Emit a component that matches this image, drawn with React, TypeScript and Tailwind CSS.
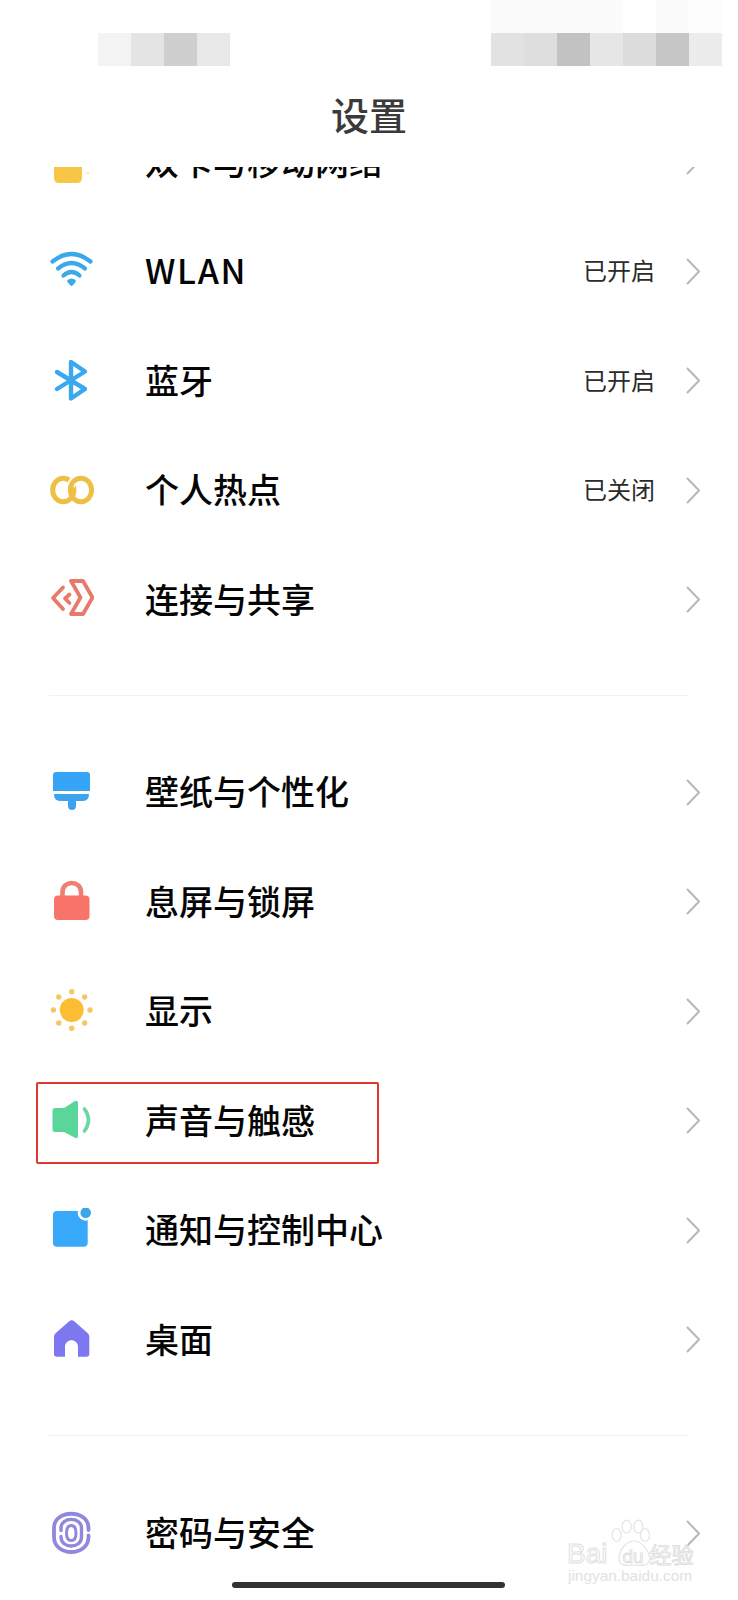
import React from "react";

const FONT = "font-['Noto_Sans_CJK_SC',sans-serif]";

const Icon = ({ children }: { children: React.ReactNode }) => (
  <svg width="44" height="44" viewBox="0 0 44 44" fill="none" className="shrink-0">
    {children}
  </svg>
);

const SimIcon = () => (
  <Icon>
    <path d="M4 2 H32 V37 Q32 43 27 43 H9 Q4 43 4 37 Z" fill="#f8c546" />
    <circle cx="38" cy="33" r="1" fill="#f8d98a" />
  </Icon>
);
const WifiIcon = () => (
  <Icon>
    <g stroke="#3ba8ea" strokeWidth="4.2" strokeLinecap="round">
      <path d="M2.5 12.5 Q21.5 -2.5 40.5 12.5" />
      <path d="M8 19.5 Q21.5 8.5 35 19.5" />
      <path d="M13.5 26.5 Q21.5 19.5 29.5 26.5" />
    </g>
    <path d="M17.5 31 Q21.5 28 25.5 31 Q26.3 32 25.5 33 L22.8 36.3 Q21.5 37.5 20.2 36.3 L17.5 33 Q16.7 32 17.5 31 Z" fill="#3ba8ea" />
  </Icon>
);
const BluetoothIcon = () => (
  <Icon>
    <path d="M7 13 L35 30 L21 39.5 V3 L35 12.5 L7 30" stroke="#39a8ee" strokeWidth="4.4" strokeLinejoin="round" strokeLinecap="round" />
  </Icon>
);
const HotspotIcon = () => (
  <Icon>
    <ellipse cx="31" cy="22" rx="10.6" ry="11.8" stroke="#eebf45" strokeWidth="5" />
    <ellipse cx="13.3" cy="22" rx="10.6" ry="11.8" stroke="#eebf45" strokeWidth="5" />
    <path d="M20.55 18.3 A11 12 0 0 1 24.95 12" stroke="#ffffff" strokeWidth="8.5" />
    <path d="M20.4 22 A10.6 11.8 0 0 1 25.5 11.8" stroke="#eebf45" strokeWidth="5" />
  </Icon>
);
const ConnectIcon = () => (
  <Icon>
    <g stroke="#e87a6b" strokeWidth="3.8" strokeLinejoin="round" strokeLinecap="round">
      <path d="M21 3 H33 L42.5 19.5 L33 36 H21 L30.5 19.5 Z" />
      <path d="M13 9.5 L3 20 L13 31" />
      <path d="M19.5 16.5 L15 20.5 L19.5 25" />
    </g>
  </Icon>
);
const WallpaperIcon = () => (
  <Icon>
    <path d="M6 2 H37 Q40 2 40 5 V21 H3 V5 Q3 2 6 2 Z" fill="#36a4f7" />
    <path d="M4 24 H39 Q39 31 33 31 H26 V36 Q26 40 22 40 Q18 40 18 36 V31 H10 Q4 31 4 24 Z" fill="#3ea2ec" />
  </Icon>
);
const LockIcon = () => (
  <Icon>
    <path d="M12.5 18 V12 C12.5 0 31 0 31 12 V18" stroke="#ee7f74" strokeWidth="4.6" />
    <rect x="4" y="15.5" width="35.5" height="24.5" rx="4" fill="#f8736a" />
  </Icon>
);
const SunIcon = () => {
  const dots = [0, 45, 90, 135, 180, 225, 270, 315];
  return (
    <Icon>
      <circle cx="21.7" cy="21" r="12" fill="#fbbd34" />
      {dots.map((d) => (
        <circle
          key={d}
          cx={21.7 + 18.3 * Math.cos((d * Math.PI) / 180)}
          cy={21 + 18.3 * Math.sin((d * Math.PI) / 180)}
          r="2.7"
          fill="#f4c763"
        />
      ))}
    </Icon>
  );
};
const SoundIcon = () => (
  <Icon>
    <path d="M5 9 H14 L25 2 Q28 0.8 28 4 V37 Q28 40 25 38.8 L14 33 H5 Q2.5 33 2.5 30.5 V11.5 Q2.5 9 5 9 Z" fill="#5ad69b" />
    <path d="M34.5 10 Q42.5 21 34.5 32" stroke="#6bd7a4" strokeWidth="3.6" strokeLinecap="round" />
  </Icon>
);
const NotifyIcon = () => (
  <Icon>
    <rect x="3" y="3" width="34.7" height="35.7" rx="4" fill="#38a8fb" />
    <circle cx="35.7" cy="4.7" r="8" fill="#ffffff" />
    <circle cx="35.7" cy="4.7" r="5.3" fill="#3ba6ea" />
  </Icon>
);
const HomeIcon = () => (
  <Icon>
    <path d="M19.5 3 Q21.7 1.4 24 3 L37.5 15 Q39.3 16.6 39.3 19 V36 Q39.3 38.7 36.5 38.7 H28 V29 C28 20 15 20 15 29 V38.7 H7 Q4 38.7 4 36 V19 Q4 16.6 5.8 15 Z" fill="#7d78ef" />
  </Icon>
);
const FingerIcon = () => (
  <Icon>
    <g stroke="#8f88dd" fill="none" strokeLinecap="round">
      <path d="M38.5 19 V17 C38.5 -2 4 -2 4 17 V26 C4 46 38.5 46 38.5 26 V24.5" strokeWidth="3.8" />
      <path d="M11 19.5 V17 C11 5.5 31.5 5.5 31.5 17 V26 C31.5 38 11 38 11 26 V25.5" strokeWidth="3.4" />
      <path d="M21.3 14.5 C25 14.5 26 18 26 22 C26 26 25 29.5 21.3 29.5 C17.5 29.5 16.5 26 16.5 22 C16.5 18 17.5 14.5 21.3 14.5 Z" strokeWidth="3" />
    </g>
  </Icon>
);

const Chevron = () => (
  <svg width="14" height="27" viewBox="0 0 14 27" fill="none" className="shrink-0">
    <path d="M1 1 L13 13.5 L1 26" stroke="#b8b8b8" strokeWidth="2" />
  </svg>
);

type RowProps = { icon: React.ReactNode; label: string; value?: string; highlight?: boolean; wide?: boolean };

const Row = ({ icon, label, value, highlight, wide }: RowProps) => (
  <div className="relative flex h-[109.5px] items-center pl-[50px] pr-[38px]">
    <div className="w-[95px] shrink-0">{icon}</div>
    <span className={`flex-1 pb-[2px] text-[34px] leading-none font-medium text-[#050505] ${wide ? "tracking-[1.7px]" : ""}`}>
      {label}
    </span>
    {value && <span className="mr-[31px] pb-[2px] text-[24px] leading-none text-[#2b2b2b]">{value}</span>}
    <Chevron />
    {highlight && (
      <div className="absolute left-[36px] top-[16px] h-[82px] w-[343px] rounded-[2px] border-2 border-[#dc3a2e]" />
    )}
  </div>
);

export default function App() {
  const left = ["bg-[#f3f3f3]", "bg-[#e4e4e4]", "bg-[#cfcfcf]", "bg-[#e8e8e8]"];
  const rightTop = ["bg-[#fbfbfb]", "bg-[#fbfbfb]", "bg-[#fafafa]", "bg-[#fbfbfb]", "bg-white", "bg-[#fbfbfb]", "bg-[#fdfdfd]"];
  const rightBottom = ["bg-[#e2e2e2]", "bg-[#dedede]", "bg-[#c2c2c2]", "bg-[#e6e6e6]", "bg-[#dcdcdc]", "bg-[#c6c6c6]", "bg-[#ececec]"];

  return (
    <div className={`relative h-[1600px] w-[738px] overflow-hidden bg-white ${FONT}`}>
      <div className="flex h-[66px] justify-between pl-[98px] pr-[16px]">
        <div className="mt-[33px] flex h-[33px]">
          {left.map((c, i) => (
            <div key={i} className={`h-full w-[33px] ${c}`} />
          ))}
        </div>
        <div className="flex flex-col">
          <div className="flex h-[33px]">
            {rightTop.map((c, i) => (
              <div key={i} className={`h-full w-[33px] ${c}`} />
            ))}
          </div>
          <div className="flex h-[33px]">
            {rightBottom.map((c, i) => (
              <div key={i} className={`h-full w-[33px] ${c}`} />
            ))}
          </div>
        </div>
      </div>

      <div className="flex h-[101px] items-center justify-center pb-[6px] text-[38px] leading-none font-medium text-[#3a3a3a]">
        设置
      </div>

      <div className="h-[1433px] overflow-hidden">
        <div className="-mt-[60px]">
          <Row icon={<SimIcon />} label="双卡与移动网络" />
          <Row icon={<WifiIcon />} label="WLAN" value="已开启" wide />
          <Row icon={<BluetoothIcon />} label="蓝牙" value="已开启" />
          <Row icon={<HotspotIcon />} label="个人热点" value="已关闭" />
          <Row icon={<ConnectIcon />} label="连接与共享" />
          <div className="mx-[49px] mb-[42px] mt-[40px] h-px bg-[#f1f1f1]" />
          <Row icon={<WallpaperIcon />} label="壁纸与个性化" />
          <Row icon={<LockIcon />} label="息屏与锁屏" />
          <Row icon={<SunIcon />} label="显示" />
          <Row icon={<SoundIcon />} label="声音与触感" highlight />
          <Row icon={<NotifyIcon />} label="通知与控制中心" />
          <Row icon={<HomeIcon />} label="桌面" />
          <div className="mx-[49px] mb-[43px] mt-[40px] h-px bg-[#f1f1f1]" />
          <Row icon={<FingerIcon />} label="密码与安全" />
        </div>
      </div>

      <div className="absolute bottom-[12px] left-[232px] h-[6px] w-[273px] rounded-full bg-[#333333]" />

      <div className="absolute left-[568px] top-[1568px] font-['Liberation_Sans',sans-serif] text-[15.4px] leading-none text-[#e2e2e2]">
        jingyan.baidu.com
      </div>
      <div className="absolute left-[567px] top-[1540px] flex items-baseline font-['Liberation_Sans',sans-serif] text-[28px] leading-none text-transparent [-webkit-text-stroke:1px_#e0e0e0]">
        <span>Bai</span>
        <span className="ml-[15px] text-[19px]">du</span>
        <span className="ml-[6px] font-['Noto_Sans_CJK_SC',sans-serif] text-[22px]">经验</span>
      </div>
      <svg width="46" height="62" viewBox="0 0 46 62" fill="none" className="absolute left-[606px] top-[1508px]" stroke="#e4e4e4" strokeWidth="1.2">
        <ellipse cx="10.7" cy="27" rx="4.5" ry="6.5" />
        <ellipse cx="20.7" cy="18.7" rx="4.5" ry="6.5" />
        <ellipse cx="32.3" cy="18.7" rx="4.5" ry="6.5" />
        <ellipse cx="39" cy="27" rx="4.5" ry="6.5" />
        <path d="M13 50 C14 40 21 33 28 33 C35 33 42 41 44 50 C43 60 33 57 28 57 C23 57 13 60 13 50 Z" />
      </svg>
    </div>
  );
}
